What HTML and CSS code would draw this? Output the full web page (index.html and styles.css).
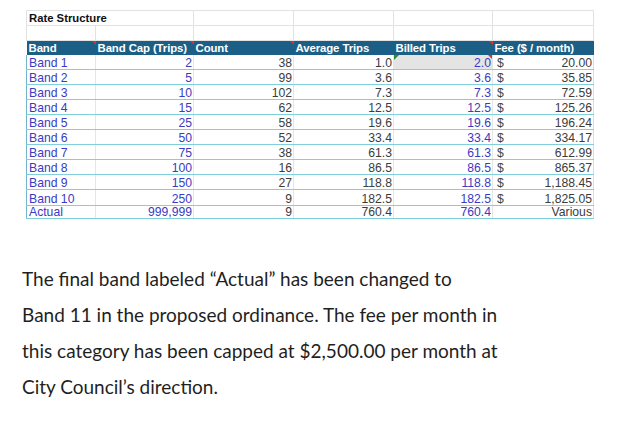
FILE: index.html
```html
<!DOCTYPE html>
<html>
<head>
<meta charset="utf-8">
<link rel="stylesheet" href="styles.css">
</head>
<body>
<div class="page">
  <table class="rates">
    <colgroup>
      <col class="c-band"><col class="c-cap"><col class="c-count"><col class="c-avg"><col class="c-billed"><col class="c-cur"><col class="c-fee">
    </colgroup>
    <tr class="plain">
      <td colspan="2" class="title">Rate Structure</td><td></td><td></td><td></td><td colspan="2"></td>
    </tr>
    <tr class="plain">
      <td></td><td></td><td></td><td></td><td></td><td colspan="2"></td>
    </tr>
    <tr class="head">
      <th class="flag">Band</th><th class="flag">Band Cap (Trips)</th><th class="flag">Count</th><th>Average Trips</th><th class="flag">Billed Trips</th><th colspan="2">Fee ($ / month)</th>
    </tr>
    <tr><td class="blue">Band 1</td><td class="blue num">2</td><td class="num">38</td><td class="num">1.0</td><td class="blue num sel flag warn">2.0</td><td class="cur">$</td><td class="num">20.00</td></tr>
    <tr><td class="blue">Band 2</td><td class="blue num">5</td><td class="num">99</td><td class="num">3.6</td><td class="blue num">3.6</td><td class="cur">$</td><td class="num">35.85</td></tr>
    <tr><td class="blue">Band 3</td><td class="blue num">10</td><td class="num">102</td><td class="num">7.3</td><td class="blue num">7.3</td><td class="cur">$</td><td class="num">72.59</td></tr>
    <tr><td class="blue">Band 4</td><td class="blue num">15</td><td class="num">62</td><td class="num">12.5</td><td class="blue num">12.5</td><td class="cur">$</td><td class="num">125.26</td></tr>
    <tr><td class="blue">Band 5</td><td class="blue num">25</td><td class="num">58</td><td class="num">19.6</td><td class="blue num">19.6</td><td class="cur">$</td><td class="num">196.24</td></tr>
    <tr><td class="blue">Band 6</td><td class="blue num">50</td><td class="num">52</td><td class="num">33.4</td><td class="blue num">33.4</td><td class="cur">$</td><td class="num">334.17</td></tr>
    <tr><td class="blue">Band 7</td><td class="blue num">75</td><td class="num">38</td><td class="num">61.3</td><td class="blue num">61.3</td><td class="cur">$</td><td class="num">612.99</td></tr>
    <tr><td class="blue">Band 8</td><td class="blue num">100</td><td class="num">16</td><td class="num">86.5</td><td class="blue num">86.5</td><td class="cur">$</td><td class="num">865.37</td></tr>
    <tr><td class="blue">Band 9</td><td class="blue num">150</td><td class="num">27</td><td class="num">118.8</td><td class="blue num">118.8</td><td class="cur">$</td><td class="num">1,188.45</td></tr>
    <tr><td class="blue">Band 10</td><td class="blue num">250</td><td class="num">9</td><td class="num">182.5</td><td class="blue num">182.5</td><td class="cur">$</td><td class="num">1,825.05</td></tr>
    <tr class="last"><td class="blue">Actual</td><td class="blue num">999,999</td><td class="num">9</td><td class="num">760.4</td><td class="blue num">760.4</td><td class="cur"></td><td class="num">Various</td></tr>
  </table>

  <p class="note">The final band labeled “Actual” has been changed to<br>Band 11 in the proposed ordinance. The fee per month in<br>this category has been capped at $2,500.00 per month at<br>City Council’s direction.</p>
</div>
</body>
</html>
```
FILE: styles.css
```css
html, body {
  margin: 0;
  padding: 0;
  background: #ffffff;
}

.page {
  padding: 10px 0 0 26px;
}

.rates {
  border-collapse: collapse;
  table-layout: fixed;
  width: 567px;
  font-family: "Liberation Sans Narrow", "Liberation Sans", Arial, sans-serif;
  font-size: 12.2px;
  color: #3c3c3c;
}

.c-band { width: 69px; }
.c-cap { width: 98px; }
.c-count { width: 100px; }
.c-avg { width: 100px; }
.c-billed { width: 99px; }
.c-cur { width: 18px; }
.c-fee { width: 83px; }

.rates td, .rates th {
  height: 14.1px;
  padding: 0 1px 0 2px;
  line-height: 12px;
  vertical-align: bottom;
  white-space: nowrap;
  overflow: visible;
  position: relative;
}

.rates tr.plain td {
  border: 1px solid #e2e2e2;
  height: 14px;
}

.rates td.title {
  font-family: "Liberation Sans", Arial, sans-serif;
  font-weight: bold;
  font-size: 11.3px;
  color: #111;
  vertical-align: middle;
}

.rates tr.head th {
  background: #1b5f86;
  color: #ffffff;
  font-family: "Liberation Sans", Arial, sans-serif;
  font-weight: bold;
  font-size: 11.4px;
  text-align: left;
  padding: 0 2px;
  height: 13.6px;
  vertical-align: middle;
  letter-spacing: -0.1px;
}

.rates tr:not(.plain):not(.head) td {
  border-bottom: 1px solid #80cfdc;
  border-left: 1px solid #e6e6e6;
  border-right: 1px solid #e6e6e6;
}

.rates tr:not(.plain):not(.head) td:first-child {
  border-left: 1px solid #6fb6cc;
}

.rates tr:not(.plain):not(.head) td.cur {
  border-right: none;
  color: #444;
  padding-left: 4px;
}

.rates tr:not(.plain):not(.head) td.cur + td {
  border-left: none;
  border-right: 1px solid #dcdcdc;
}

.rates tr.last td {
  border-bottom: 1px solid #4a4a4a;
  height: 12.5px;
  line-height: 11px;
}

.num {
  text-align: right;
}

.blue {
  color: #3a3ac2;
}

.sel {
  background: #e4e4e4;
}

.flag::after {
  content: "";
  position: absolute;
  top: 0;
  right: 0;
  border-top: 4px solid #e0302e;
  border-left: 4px solid transparent;
}

.warn::before {
  content: "";
  position: absolute;
  top: 0;
  left: 0;
  border-top: 5px solid #2e8b2e;
  border-right: 5px solid transparent;
}

.note {
  margin: 42px 0 0 -4px;
  font-family: Lato, "Open Sans", sans-serif;
  font-size: 19px;
  line-height: 36px;
  color: #1f1f1f;
}
```
